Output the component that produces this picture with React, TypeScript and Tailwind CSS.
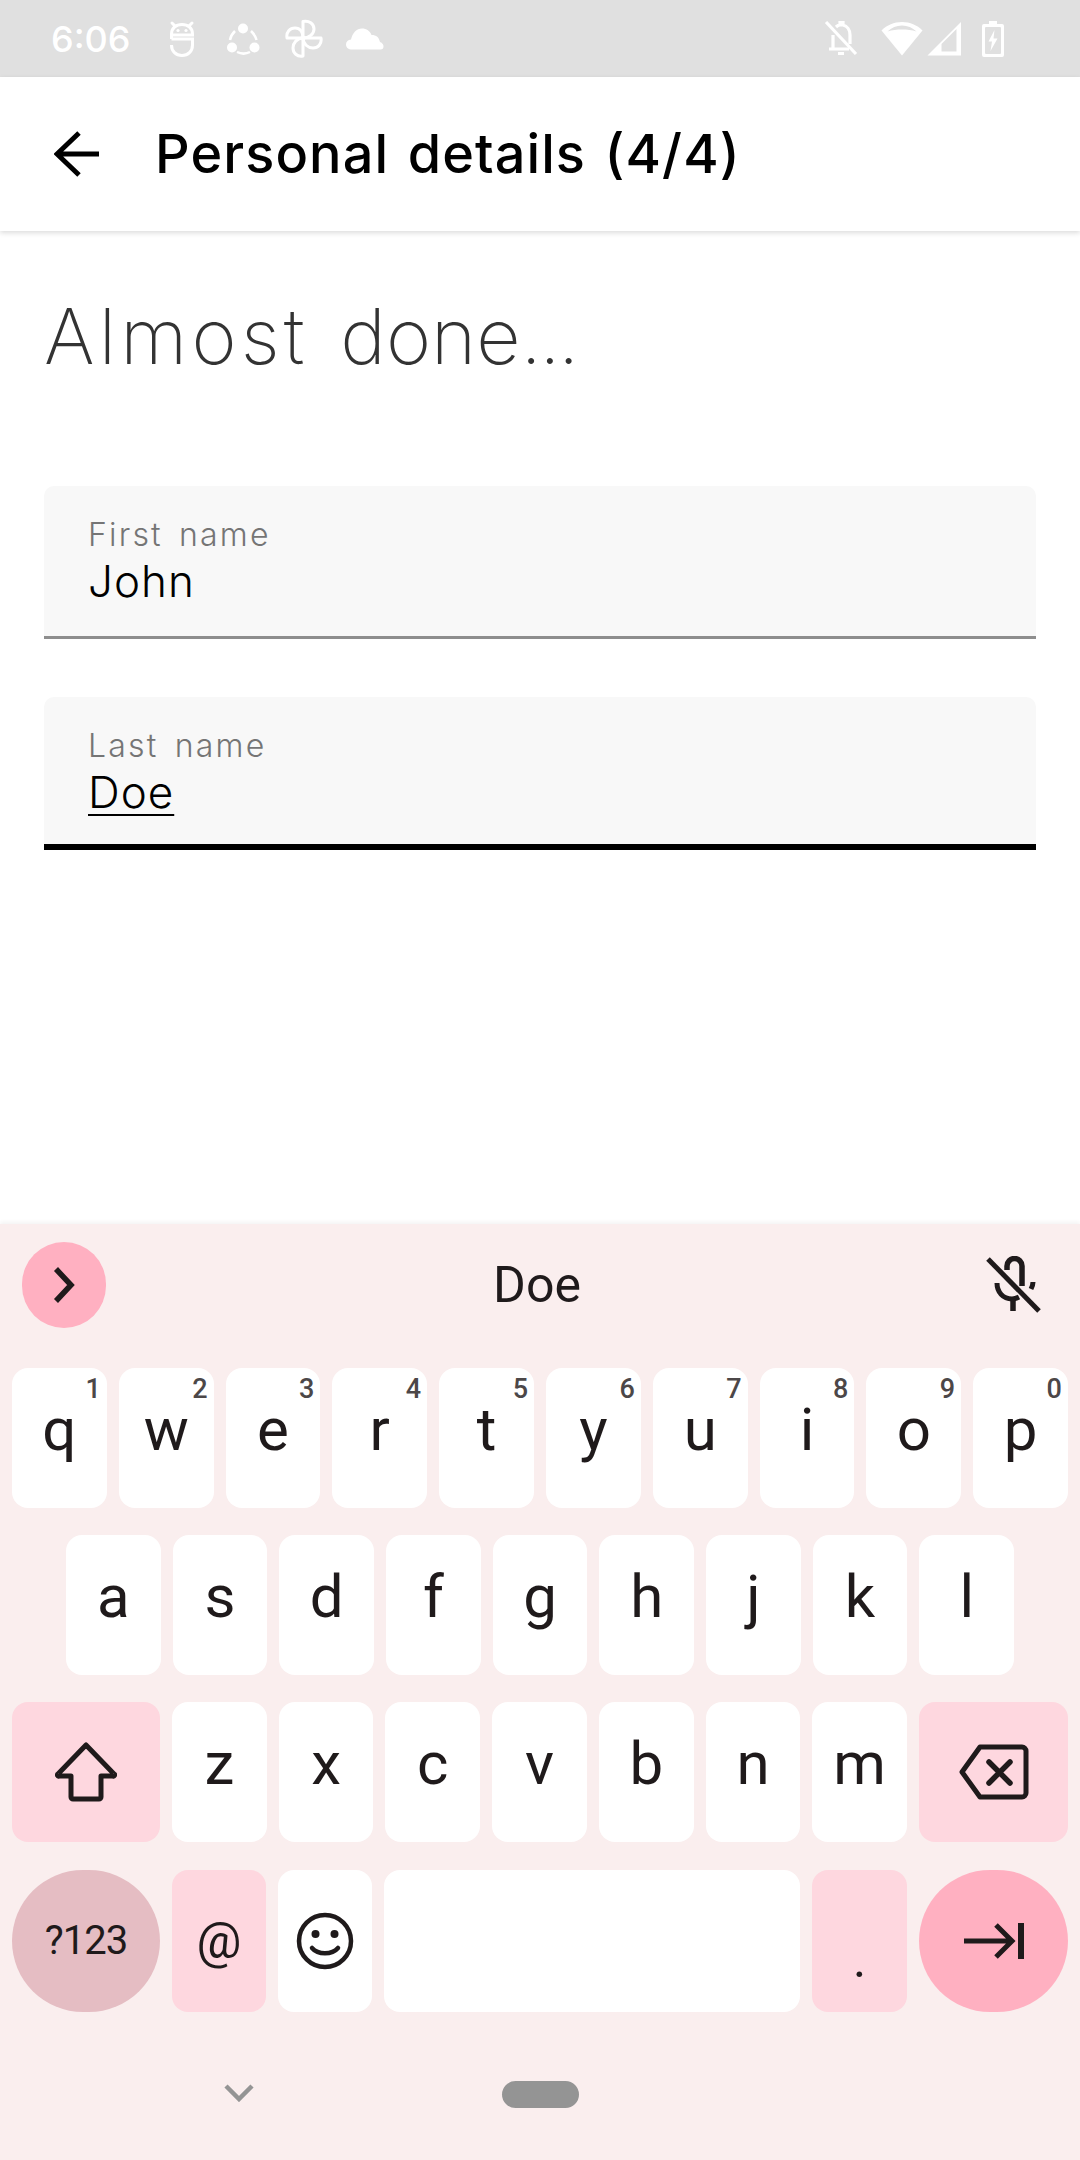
import React from "react";

const ink = "#1f1a1b";

function Key({ label, hint, className = "" }: { label?: string; hint?: string; className?: string }) {
  return (
    <div className={`relative flex-1 h-full rounded-[16px] bg-white flex justify-center pt-[32px] text-[60px] leading-[60px] ${className}`}>
      {label}
      {hint && (
        <span className="absolute right-[6px] top-[5px] text-[27px] leading-[32px] font-medium text-[#4c4748]">{hint}</span>
      )}
    </div>
  );
}

function Robot() {
  return (
    <svg width="26" height="37" viewBox="0 0 26 37" fill="none" stroke="white" strokeWidth="3" className="ml-[38px]">
      <path d="M3 3l3 3M23 3l-3 3" strokeLinecap="round" />
      <path d="M2.500 19V14C2.500 8 7 4.500 13 4.500S23.500 8 23.500 14v1H2.500" />
      <path d="M2.500 19H23.500v6c0 6.500-4.500 10.500-10.500 10.500S2.500 31.500 2.500 25" />
      <circle cx="9" cy="10.500" r="1.600" fill="white" stroke="none" />
      <circle cx="17" cy="10.500" r="1.600" fill="white" stroke="none" />
    </svg>
  );
}

function Share() {
  return (
    <svg width="33" height="32" viewBox="0 0 33 32" fill="white" className="ml-[32px]">
      <circle cx="16" cy="5.500" r="5" />
      <circle cx="5" cy="24.500" r="5" />
      <circle cx="27.500" cy="24.500" r="5" />
      <path d="M8 8C5 11 3.500 13.500 3 17M24 8c3 3 5 6 5.500 9M10 29c4 2 9 2 13 0" fill="none" stroke="white" strokeWidth="2.500" />
    </svg>
  );
}

function Pinwheel() {
  return (
    <svg width="38" height="39" viewBox="0 0 38 39" fill="none" stroke="white" strokeWidth="3" strokeLinejoin="round" className="ml-[25px]">
      <path d="M18 19V2.500C24 1 29 5 29 10c0 5-5 9-11 9Z" />
      <path d="M18 19h18c1 6-3 10-8 10-5 0-10-4-10-10Z" />
      <path d="M18 19v18c-6 1-10-3-10-8 0-5 4-10 10-10Z" />
      <path d="M18 19H2c-1-6 3-10 8-10 5 0 8 4 8 10Z" />
    </svg>
  );
}

function Cloud() {
  return (
    <svg width="38" height="22" viewBox="0 0 38 22" fill="white" className="ml-[23px]">
      <path d="M6 21.500C2.500 21.500 0 19.500 0 16.500 0 13.500 2 12 5 11.500 6.500 5 10.500 0.500 16 0.500c4.500 0 8 2.500 9.500 6.500 5 0 7.500 2.500 8.500 7 2.500 1 3.500 2.500 3.500 4.500 0 2-1 3-3 3Z" />
    </svg>
  );
}

function BellOff() {
  return (
    <svg width="34" height="37" viewBox="0 0 34 37" fill="none" stroke="white" strokeWidth="3.200" className="ml-auto">
      <path d="M2 2l30 32" />
      <path d="M9 15v14l-4 0H25" />
      <path d="M12 7c1-1 3-2 4-2V2.500h3V5c4 1 7 5 7 10v9" />
      <path d="M14 33.500h6" strokeWidth="3" />
    </svg>
  );
}

function Wifi() {
  return (
    <svg width="42" height="35" viewBox="0 0 42 35" fill="white" className="ml-[23px]">
      <path d="M21 34.500 0.500 9.500C6 4 13 1 21 1s15 3 20.500 8.500Z" />
      <path d="M6.500 10.500C10.500 6.500 15.500 4.500 21 4.500s10.500 2 14.500 6C31 9 26 8.500 21 8.500S11 9 6.500 10.500Z" fill="#e0e0e0" />
    </svg>
  );
}

function Signal() {
  return (
    <svg width="35" height="34" viewBox="0 0 35 34" fill="white" className="ml-[4px]">
      <path fillRule="evenodd" d="M34 0V33.500H0.500ZM14.500 22 29.500 7V29.500H14.500Z" />
    </svg>
  );
}

function Battery() {
  return (
    <svg width="22" height="36" viewBox="0 0 22 36" fill="none" className="ml-[20px] mr-[76px]">
      <path d="M7 0h8v3h5a2 2 0 0 1 2 2v29a2 2 0 0 1-2 2H2a2 2 0 0 1-2-2V5a2 2 0 0 1 2-2h5Z" fill="white" />
      <rect x="3" y="6" width="16" height="27" rx="1" fill="#e0e0e0" />
      <path d="M12.500 9 6.500 20.500H10L8.500 30 15.500 17.500H11.500Z" fill="white" />
    </svg>
  );
}

function Field({ label, value, focused }: { label: string; value: string; focused?: boolean }) {
  return (
    <div className={`h-[153px] rounded-t-[10px] bg-[#f8f8f8] px-[44px] pt-[31px] ${focused ? "border-b-[6px] border-black" : "border-b-[3px] border-[#8e8e8e]"}`}>
      <div className="text-[32px] leading-[36px] tracking-[2.200px] text-[#757575] font-light [word-spacing:5px]">{label}</div>
      <div className={`mt-[5px] text-[44px] leading-[46px] text-black font-light tracking-[1px] ${focused ? "underline decoration-[2px] underline-offset-[6px]" : ""}`}>{value}</div>
    </div>
  );
}

export default function App() {
  return (
    <div className="w-[1080px] h-[2160px] flex flex-col bg-white overflow-hidden font-['Inter',sans-serif]">
      <div className="h-[77px] bg-[#e0e0e0] flex items-center pl-[51px] text-white shrink-0">
        <span className="text-[36px] leading-[40px] font-medium font-['Inter',sans-serif]">6:06</span>
        <Robot />
        <Share />
        <Pinwheel />
        <Cloud />
        <BellOff />
        <Wifi />
        <Signal />
        <Battery />
      </div>

      <div className="h-[154px] shrink-0 bg-white flex items-center shadow-[0_2px_5px_rgba(0,0,0,0.14)] relative z-10">
        <svg width="46" height="46" viewBox="0 0 46 46" fill="none" stroke="black" strokeWidth="5" className="ml-[54px]">
          <path d="M45 23H4M25 2 3 23l22 21" />
        </svg>
        <span className="ml-[55px] text-[54px] leading-[60px] font-medium text-black tracking-[1.100px] [word-spacing:3px]">Personal details (4/4)</span>
      </div>

      <div className="flex-1 px-[44px] pt-[60px]">
        <div className="text-[77px] leading-[90px] font-extralight text-[#333333] font-['Inter',sans-serif] tracking-[0px] [word-spacing:10px]">
          <span className="tracking-[4.200px]">Almost</span> done<span className="tracking-[-2.500px]">...</span>
        </div>
        <div className="mt-[105px] flex flex-col gap-[58px]">
          <Field label="First name" value="John" />
          <Field label="Last name" value="Doe" focused />
        </div>
      </div>

      <div className="h-[936px] shrink-0 bg-[#faeeee] shadow-[0_-2px_4px_rgba(0,0,0,0.05)] font-['Roboto',sans-serif] text-[#1f1a1b] flex flex-col">
        <div className="h-[144px] flex items-center px-[22px] pb-[22px] shrink-0">
          <div className="w-[84px] h-[86px] rounded-full bg-[#ffb0c1] flex items-center justify-center">
            <svg width="24" height="36" viewBox="0 0 24 36" fill="none" stroke={ink} strokeWidth="5.500">
              <path d="M4 2 19 18 4 34" />
            </svg>
          </div>
          <div className="flex-1 text-center text-[50px] leading-[60px] pr-[18px]">Doe</div>
          <svg width="56" height="58" viewBox="0 0 56 58" fill="none" stroke={ink} strokeWidth="5" className="mr-[16px]">
            <path d="M2 3 53 55" strokeWidth="5" />
            <path d="M21 14V10a7.500 7.500 0 0 1 15 0v20" strokeWidth="5.500" />
            <path d="M11 27c0 9 6 16 15 16 3 0 5-1 7-2M47 26c0 2-1 5-2 7" />
            <path d="M27 43v12" strokeWidth="5.500" />
          </svg>
        </div>

        <div className="flex flex-col gap-[27px] px-[12px]">
          <div className="h-[140px] flex gap-[12px]">
            <Key label="q" hint="1" />
            <Key label="w" hint="2" />
            <Key label="e" hint="3" />
            <Key label="r" hint="4" />
            <Key label="t" hint="5" />
            <Key label="y" hint="6" />
            <Key label="u" hint="7" />
            <Key label="i" hint="8" />
            <Key label="o" hint="9" />
            <Key label="p" hint="0" />
          </div>
          <div className="h-[140px] flex gap-[12px] px-[54px]">
            {["a", "s", "d", "f", "g", "h", "j", "k", "l"].map((k) => (
              <Key key={k} label={k} />
            ))}
          </div>
          <div className="h-[140px] flex gap-[12px]">
            <div className="w-[148px] shrink-0 rounded-[16px] bg-[#fed7df] flex items-center justify-center">
              <svg width="62" height="60" viewBox="0 0 62 60" fill="none" stroke={ink} strokeWidth="5" strokeLinejoin="round">
                <path d="M31 3 3 32a1 1 0 0 0 1 2H16V55a2 2 0 0 0 2 2H44a2 2 0 0 0 2-2V34H58a1 1 0 0 0 1-2Z" />
              </svg>
            </div>
            {["z", "x", "c", "v", "b", "n", "m"].map((k) => (
              <Key key={k} label={k} />
            ))}
            <div className="w-[149px] shrink-0 rounded-[16px] bg-[#fed7df] flex items-center justify-center">
              <svg width="70" height="56" viewBox="0 0 70 56" fill="none" stroke={ink} strokeWidth="5" strokeLinejoin="round">
                <path d="M21 3H63a4 4 0 0 1 4 4V49a4 4 0 0 1-4 4H21L3 28Z" />
                <path d="M30 18 51 39M51 18 30 39" strokeLinecap="round" strokeWidth="5.500" />
              </svg>
            </div>
          </div>
          <div className="h-[142px] mt-[1px] flex gap-[12px]">
            <div className="w-[148px] shrink-0 rounded-full bg-[#e5bdc3] flex items-center justify-center text-[40px] leading-[48px] tracking-[-1px]">?123</div>
            <div className="w-[94px] shrink-0 rounded-[16px] bg-[#fed7df] flex items-center justify-center text-[50px] leading-[50px] font-normal">@</div>
            <div className="w-[94px] shrink-0 rounded-[16px] bg-white flex items-center justify-center">
              <svg width="58" height="58" viewBox="0 0 58 58" fill="none" stroke={ink} strokeWidth="4.500">
                <circle cx="29" cy="29" r="26" />
                <circle cx="19.500" cy="22" r="4" fill={ink} stroke="none" />
                <circle cx="38.500" cy="22" r="4" fill={ink} stroke="none" />
                <path d="M16 36c6 7 20 7 26 0" strokeLinecap="round" />
              </svg>
            </div>
            <div className="flex-1 rounded-[16px] bg-white" />
            <div className="w-[95px] shrink-0 rounded-[16px] bg-[#fed7df] flex justify-center pt-[60px] text-[50px] leading-[60px]">.</div>
            <div className="w-[149px] shrink-0 rounded-full bg-[#ffb0c1] flex items-center justify-center">
              <svg width="60" height="36" viewBox="0 0 60 36" fill="none" stroke={ink} strokeWidth="5">
                <path d="M0 18H49M32 2 48 18 32 34" />
                <path d="M57 0V36" strokeWidth="6" />
              </svg>
            </div>
          </div>
        </div>

        <div className="flex-1 flex items-start pt-[69px]">
          <svg width="30" height="18" viewBox="0 0 30 18" fill="none" stroke="#949494" strokeWidth="4.500" className="ml-[224px] mt-[3px]">
            <path d="M2 2 15 15 28 2" />
          </svg>
          <div className="ml-[248px] w-[77px] h-[27px] rounded-full bg-[#949494]" />
        </div>
      </div>
    </div>
  );
}
